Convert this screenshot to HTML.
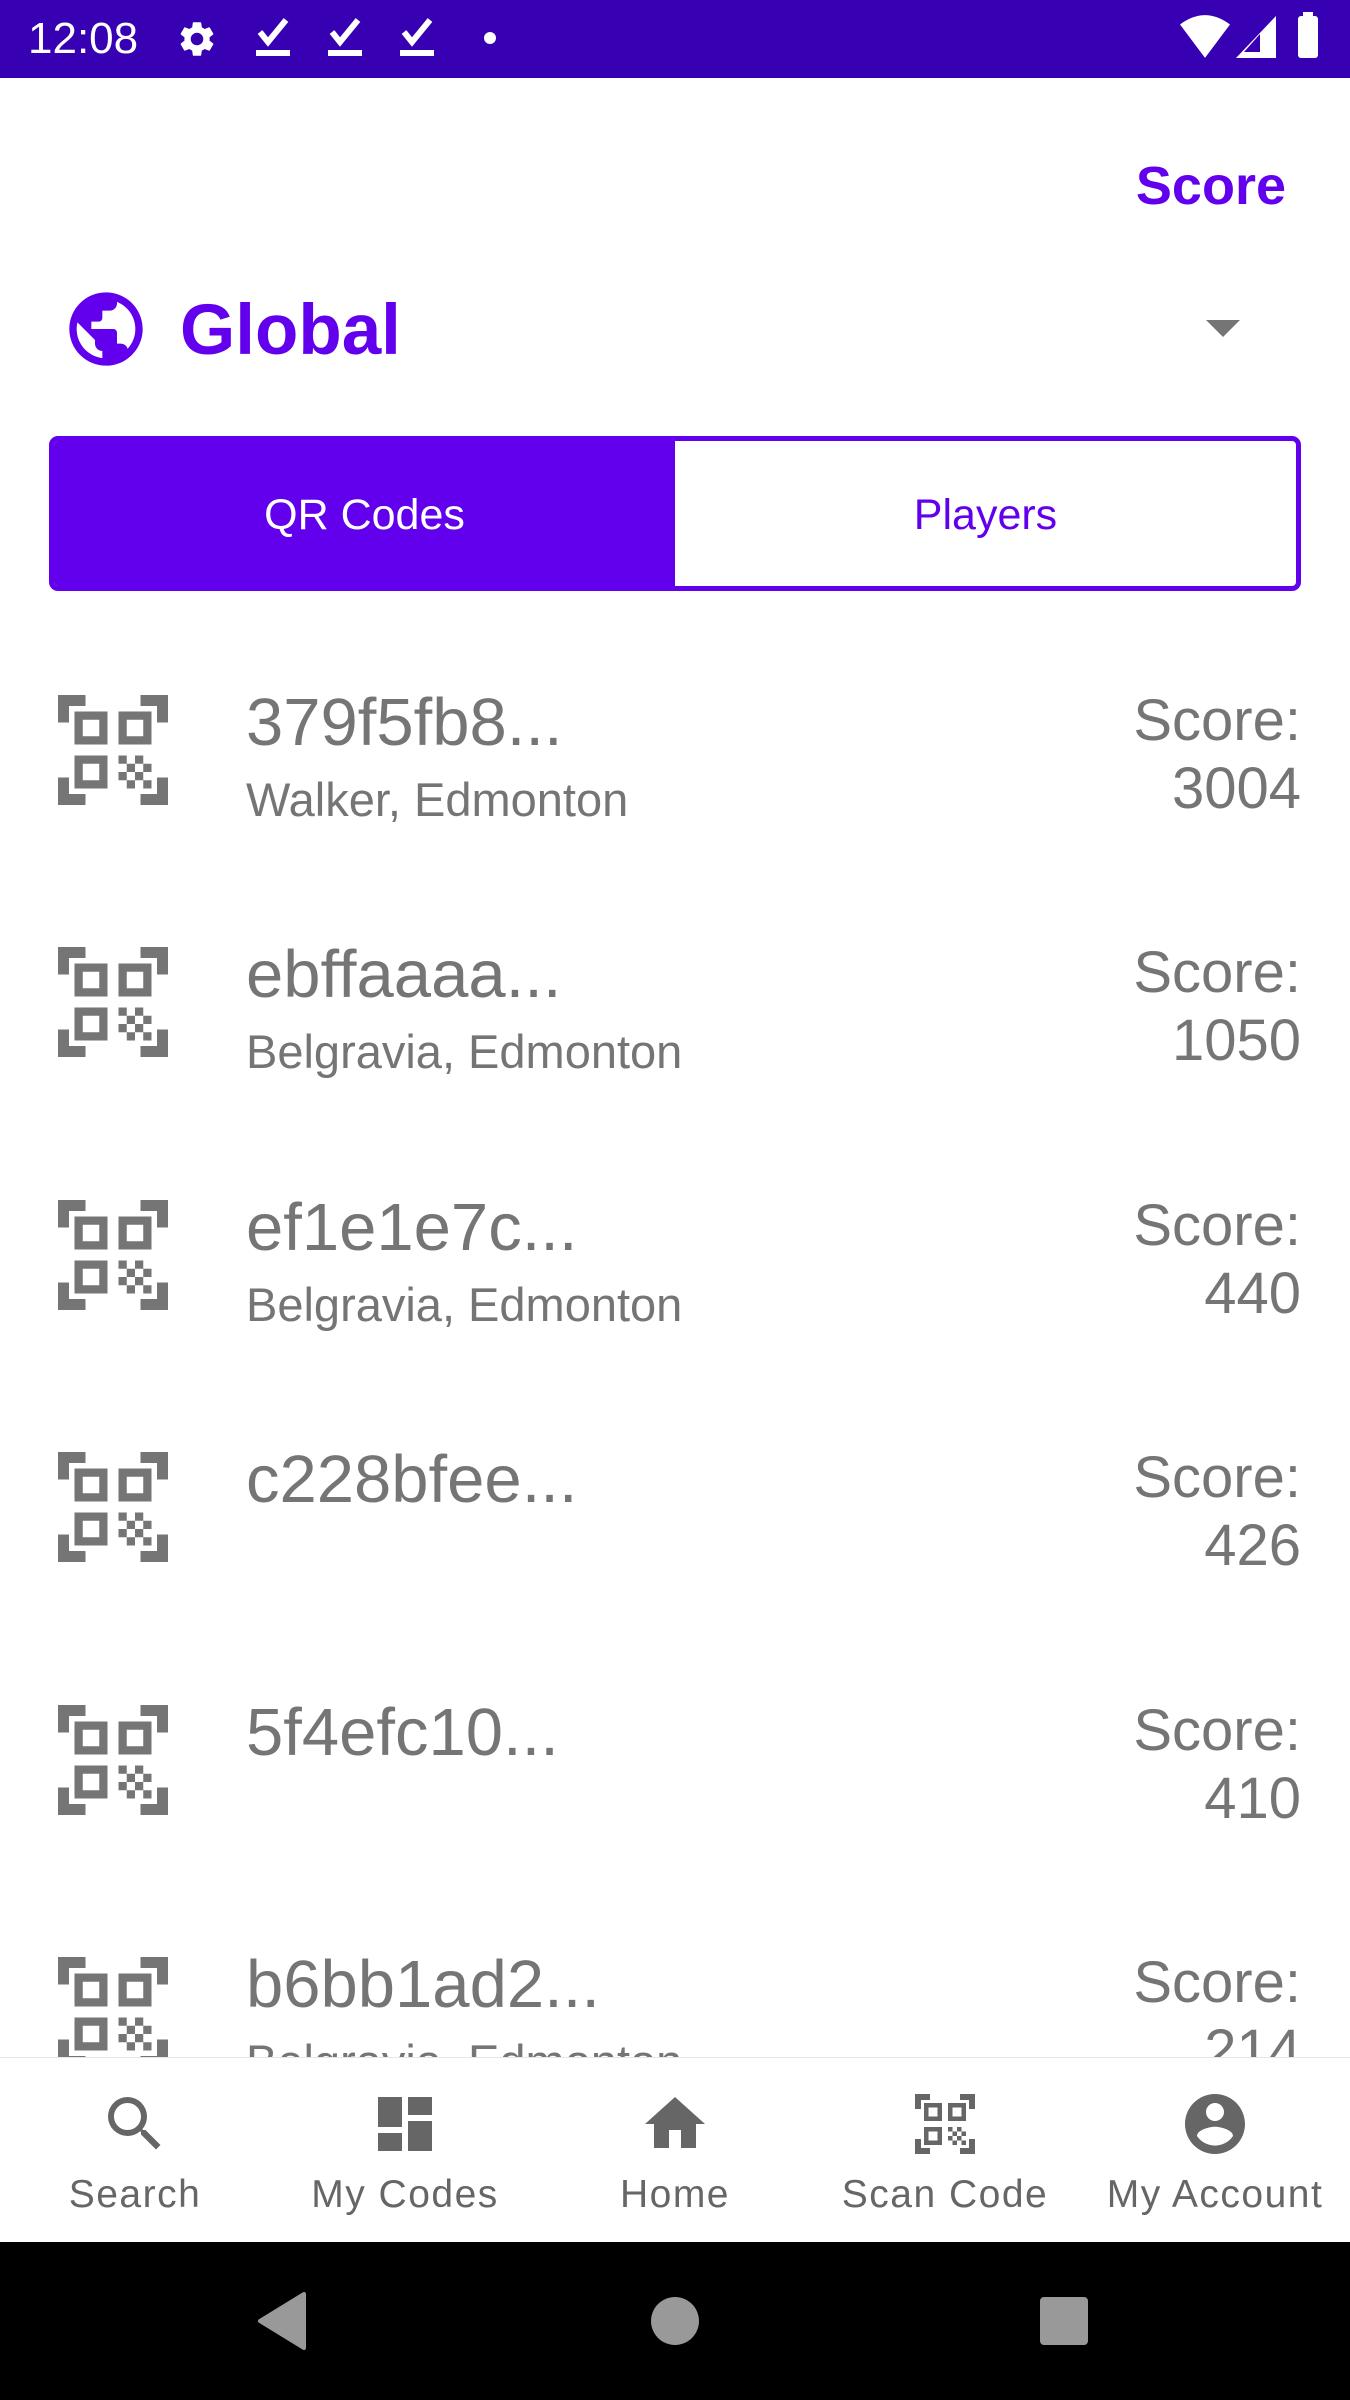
<!DOCTYPE html>
<html><head><meta charset="utf-8"><style>
*{margin:0;padding:0;box-sizing:border-box}
body{width:1350px;height:2400px;background:#fff;font-family:"Liberation Sans",sans-serif;position:relative;overflow:hidden}
.abs{position:absolute}
.status{left:0;top:0;width:1350px;height:78px;background:#3700B3;color:#fff}
.row{position:absolute;left:0;width:1350px;height:252px}
.t{position:absolute;left:246px;font-size:67px;color:#757575;line-height:1}
.s{position:absolute;left:246px;font-size:47px;color:#757575;line-height:1}
.sc{position:absolute;right:49px;font-size:58px;color:#757575;text-align:right;line-height:68px}
.nav{left:0;top:2057px;width:1350px;height:185px;background:#fff;border-top:1px solid #e6e6e6}
.ni{position:absolute;width:270px;text-align:center;top:0}
.ni svg{position:absolute;left:99px;top:30px}
.ni span{position:absolute;left:-10px;width:290px;top:115px;font-size:39px;color:#666;letter-spacing:1.5px}
</style></head><body>
<div class="abs status">
<div class="abs" style="left:28px;top:14px;font-size:44px">12:08</div>
<svg class="abs" style="left:176px;top:18px" width="42" height="42" viewBox="0 0 24 24"><path fill="#fff" d="M19.14 12.94c.04-.3.06-.61.06-.94 0-.32-.02-.64-.07-.94l2.03-1.58a.49.49 0 00.12-.61l-1.920-3.32a.488.488 0 00-.59-.22l-2.39.96c-.5-.38-1.03-.7-1.62-.94l-.36-2.54a.484.484 0 00-.48-.41h-3.84c-.24 0-.43.17-.47.41l-.36 2.54c-.59.24-1.13.57-1.62.94l-2.39-.96c-.22-.08-.47 0-.59.22L2.74 8.87c-.12.21-.08.47.12.61l2.03 1.58c-.05.3-.09.63-.09.94s.02.64.07.94l-2.03 1.58a.49.49 0 00-.12.61l1.92 3.32c.12.22.37.29.59.22l2.39-.96c.5.38 1.03.7 1.62.94l.36 2.54c.05.24.24.41.48.41h3.84c.24 0 .44-.17.47-.41l.36-2.54c.59-.24 1.13-.56 1.62-.94l2.39.96c.22.08.47 0 .59-.22l1.92-3.32c.12-.22.07-.47-.12-.61l-2.01-1.58zM12 15.6c-1.98 0-3.6-1.62-3.6-3.6s1.62-3.6 3.6-3.6 3.6 1.62 3.6 3.6-1.62 3.6-3.6 3.6z"/></svg>
<svg class="abs" style="left:254px;top:16px" width="40" height="44" viewBox="0 0 20 22"><path d="M3 8l4 5 9-11" stroke="#fff" stroke-width="3" fill="none"/><rect x="1" y="17" width="17" height="3" fill="#fff"/></svg>
<svg class="abs" style="left:326px;top:16px" width="40" height="44" viewBox="0 0 20 22"><path d="M3 8l4 5 9-11" stroke="#fff" stroke-width="3" fill="none"/><rect x="1" y="17" width="17" height="3" fill="#fff"/></svg>
<svg class="abs" style="left:398px;top:16px" width="40" height="44" viewBox="0 0 20 22"><path d="M3 8l4 5 9-11" stroke="#fff" stroke-width="3" fill="none"/><rect x="1" y="17" width="17" height="3" fill="#fff"/></svg>
<div class="abs" style="left:484px;top:32px;width:12px;height:12px;border-radius:50%;background:#fff"></div>
<svg class="abs" style="left:1180px;top:14px" width="50" height="46" viewBox="0 0 24 22"><path fill="#fff" d="M12 21L0 5Q12-4 24 5z"/></svg>
<svg class="abs" style="left:1236px;top:16px" width="40" height="42" viewBox="0 0 20 21"><path fill="#fff" d="M20 0v21H0z"/><path fill="#3700B3" d="M12 9v9H4z"/><rect x="14" y="8" width="3" height="10" fill="#fff"/></svg>
<div class="abs" style="left:1298px;top:16px;width:20px;height:42px;background:#fff;border-radius:3px"></div>
<div class="abs" style="left:1303px;top:12px;width:10px;height:6px;background:#fff"></div>
</div>

<div class="abs" style="right:64px;top:155px;font-size:54px;font-weight:bold;color:#6200EE">Score</div>
<svg class="abs" style="left:62px;top:285px" width="88" height="88" viewBox="0 0 24 24"><path fill="#6200EE" d="M12 2C6.48 2 2 6.48 2 12s4.480 10 10 10 10-4.48 10-10S17.52 2 12 2zm-1 17.93c-3.95-.49-7-3.85-7-7.93 0-.62.08-1.21.21-1.79L9 15v1c0 1.1.9 2 2 2v1.930zm6.9-2.54c-.26-.81-1-1.39-1.9-1.39h-1v-3c0-.55-.45-1-1-1H8v-2h2c.55 0 1-.45 1-1V7h2c1.1 0 2-.9 2-2v-.41c2.93 1.19 5 4.06 5 7.41 0 2.08-.8 3.97-2.1 5.39z"/></svg>
<div class="abs" style="left:180px;top:290px;font-size:71px;font-weight:bold;color:#6200EE">Global</div>
<svg class="abs" style="left:1206px;top:320px" width="34" height="18" viewBox="0 0 34 18"><path d="M0 0h34L17 17z" fill="#757575"/></svg>

<div class="abs" style="left:49px;top:436px;width:1252px;height:155px;border:5px solid #6200EE;border-radius:9px;overflow:hidden">
<div class="abs" style="left:0;top:0;width:621px;height:145px;background:#6200EE"></div>
<div class="abs" style="left:0;top:50px;width:621px;text-align:center;color:#fff;font-size:43px">QR Codes</div>
<div class="abs" style="left:621px;top:50px;width:621px;text-align:center;color:#6200EE;font-size:43px">Players</div>
</div>

<div class="abs" style="left:0;top:600px;width:1350px;height:1457px;overflow:hidden">
<div class="row" style="top:0">
<svg class="abs" style="left:47px;top:84px" width="132" height="132" viewBox="0 0 24 24"><path fill="#757575" d="M9.5 6.5v3h-3v-3h3M11 5H5v6h6V5zm-1.5 9.5v3h-3v-3h3M11 13H5v6h6v-6zm6.5-6.5v3h-3v-3h3M19 5h-6v6h6V5zm-6 8h1.5v1.5H13V13zm1.5 1.5H16V16h-1.5v-1.5zM16 13h1.5v1.5H16V13zm-3 3h1.5v1.5H13V16zm1.5 1.5H16V19h-1.5v-1.5zM16 16h1.5v1.5H16V16zm1.5-1.5H19V16h-1.5v-1.5zm0 3H19V19h-1.5v-1.5zM22 7h-2V4h-3V2h5v5zm0 15v-5h-2v3h-3v2h5zM2 22h5v-2H4v-3H2v5zM2 2v5h2V4h3V2H2z"/></svg>
<div class="t" style="top:89px">379f5fb8...</div><div class="s" style="top:176px">Walker, Edmonton</div>
<div class="sc" style="top:87px">Score:<br>3004</div></div>
<div class="row" style="top:252px">
<svg class="abs" style="left:47px;top:84px" width="132" height="132" viewBox="0 0 24 24"><path fill="#757575" d="M9.5 6.5v3h-3v-3h3M11 5H5v6h6V5zm-1.5 9.5v3h-3v-3h3M11 13H5v6h6v-6zm6.5-6.5v3h-3v-3h3M19 5h-6v6h6V5zm-6 8h1.5v1.5H13V13zm1.5 1.5H16V16h-1.5v-1.5zM16 13h1.5v1.5H16V13zm-3 3h1.5v1.5H13V16zm1.5 1.5H16V19h-1.5v-1.5zM16 16h1.5v1.5H16V16zm1.5-1.5H19V16h-1.5v-1.5zm0 3H19V19h-1.5v-1.5zM22 7h-2V4h-3V2h5v5zm0 15v-5h-2v3h-3v2h5zM2 22h5v-2H4v-3H2v5zM2 2v5h2V4h3V2H2z"/></svg>
<div class="t" style="top:89px">ebffaaaa...</div><div class="s" style="top:176px">Belgravia, Edmonton</div>
<div class="sc" style="top:87px">Score:<br>1050</div></div>
<div class="row" style="top:505px">
<svg class="abs" style="left:47px;top:84px" width="132" height="132" viewBox="0 0 24 24"><path fill="#757575" d="M9.5 6.5v3h-3v-3h3M11 5H5v6h6V5zm-1.5 9.5v3h-3v-3h3M11 13H5v6h6v-6zm6.5-6.5v3h-3v-3h3M19 5h-6v6h6V5zm-6 8h1.5v1.5H13V13zm1.5 1.5H16V16h-1.5v-1.5zM16 13h1.5v1.5H16V13zm-3 3h1.5v1.5H13V16zm1.5 1.5H16V19h-1.5v-1.5zM16 16h1.5v1.5H16V16zm1.5-1.5H19V16h-1.5v-1.5zm0 3H19V19h-1.5v-1.5zM22 7h-2V4h-3V2h5v5zm0 15v-5h-2v3h-3v2h5zM2 22h5v-2H4v-3H2v5zM2 2v5h2V4h3V2H2z"/></svg>
<div class="t" style="top:89px">ef1e1e7c...</div><div class="s" style="top:176px">Belgravia, Edmonton</div>
<div class="sc" style="top:87px">Score:<br>440</div></div>
<div class="row" style="top:757px">
<svg class="abs" style="left:47px;top:84px" width="132" height="132" viewBox="0 0 24 24"><path fill="#757575" d="M9.5 6.5v3h-3v-3h3M11 5H5v6h6V5zm-1.5 9.5v3h-3v-3h3M11 13H5v6h6v-6zm6.5-6.5v3h-3v-3h3M19 5h-6v6h6V5zm-6 8h1.5v1.5H13V13zm1.5 1.5H16V16h-1.5v-1.5zM16 13h1.5v1.5H16V13zm-3 3h1.5v1.5H13V16zm1.5 1.5H16V19h-1.5v-1.5zM16 16h1.5v1.5H16V16zm1.5-1.5H19V16h-1.5v-1.5zm0 3H19V19h-1.5v-1.5zM22 7h-2V4h-3V2h5v5zm0 15v-5h-2v3h-3v2h5zM2 22h5v-2H4v-3H2v5zM2 2v5h2V4h3V2H2z"/></svg>
<div class="t" style="top:89px">c228bfee...</div>
<div class="sc" style="top:87px">Score:<br>426</div></div>
<div class="row" style="top:1010px">
<svg class="abs" style="left:47px;top:84px" width="132" height="132" viewBox="0 0 24 24"><path fill="#757575" d="M9.5 6.5v3h-3v-3h3M11 5H5v6h6V5zm-1.5 9.5v3h-3v-3h3M11 13H5v6h6v-6zm6.5-6.5v3h-3v-3h3M19 5h-6v6h6V5zm-6 8h1.5v1.5H13V13zm1.5 1.5H16V16h-1.5v-1.5zM16 13h1.5v1.5H16V13zm-3 3h1.5v1.5H13V16zm1.5 1.5H16V19h-1.5v-1.5zM16 16h1.5v1.5H16V16zm1.5-1.5H19V16h-1.5v-1.5zm0 3H19V19h-1.5v-1.5zM22 7h-2V4h-3V2h5v5zm0 15v-5h-2v3h-3v2h5zM2 22h5v-2H4v-3H2v5zM2 2v5h2V4h3V2H2z"/></svg>
<div class="t" style="top:89px">5f4efc10...</div>
<div class="sc" style="top:87px">Score:<br>410</div></div>
<div class="row" style="top:1262px">
<svg class="abs" style="left:47px;top:84px" width="132" height="132" viewBox="0 0 24 24"><path fill="#757575" d="M9.5 6.5v3h-3v-3h3M11 5H5v6h6V5zm-1.5 9.5v3h-3v-3h3M11 13H5v6h6v-6zm6.5-6.5v3h-3v-3h3M19 5h-6v6h6V5zm-6 8h1.5v1.5H13V13zm1.5 1.5H16V16h-1.5v-1.5zM16 13h1.5v1.5H16V13zm-3 3h1.5v1.5H13V16zm1.5 1.5H16V19h-1.5v-1.5zM16 16h1.5v1.5H16V16zm1.5-1.5H19V16h-1.5v-1.5zm0 3H19V19h-1.5v-1.5zM22 7h-2V4h-3V2h5v5zm0 15v-5h-2v3h-3v2h5zM2 22h5v-2H4v-3H2v5zM2 2v5h2V4h3V2H2z"/></svg>
<div class="t" style="top:89px">b6bb1ad2...</div><div class="s" style="top:176px">Belgravia, Edmonton</div>
<div class="sc" style="top:87px">Score:<br>214</div></div>
</div>

<div class="abs nav">
<div class="ni" style="left:0"><svg width="72" height="72" viewBox="0 0 24 24"><path fill="#666" d="M15.5 14h-.79l-.28-.27A6.47 6.47 0 0016 9.5 6.5 6.5 0 109.5 16c1.61 0 3.09-.59 4.23-1.57l.27.28v.79l5 4.99L20.49 19l-4.99-5zm-6 0C7.01 14 5 11.99 5 9.5S7.01 5 9.5 5 14 7.01 14 9.5 11.99 14 9.5 14z"/></svg><span>Search</span></div>
<div class="ni" style="left:270px"><svg width="72" height="72" viewBox="0 0 24 24"><path fill="#666" d="M3 13h8V3H3v10zm0 8h8v-6H3v6zm10 0h8V11h-8v10zm0-18v6h8V3h-8z"/></svg><span>My Codes</span></div>
<div class="ni" style="left:540px"><svg width="72" height="72" viewBox="0 0 24 24"><path fill="#666" d="M10 20v-6h4v6h5v-8h3L12 3 2 12h3v8z"/></svg><span>Home</span></div>
<div class="ni" style="left:810px"><svg width="72" height="72" viewBox="0 0 24 24"><path fill="#666" d="M9.5 6.5v3h-3v-3h3M11 5H5v6h6V5zm-1.5 9.5v3h-3v-3h3M11 13H5v6h6v-6zm6.5-6.5v3h-3v-3h3M19 5h-6v6h6V5zm-6 8h1.5v1.5H13V13zm1.5 1.5H16V16h-1.5v-1.5zM16 13h1.5v1.5H16V13zm-3 3h1.5v1.5H13V16zm1.5 1.5H16V19h-1.5v-1.5zM16 16h1.5v1.5H16V16zm1.5-1.5H19V16h-1.5v-1.5zm0 3H19V19h-1.5v-1.5zM22 7h-2V4h-3V2h5v5zm0 15v-5h-2v3h-3v2h5zM2 22h5v-2H4v-3H2v5zM2 2v5h2V4h3V2H2z"/></svg><span>Scan Code</span></div>
<div class="ni" style="left:1080px"><svg width="72" height="72" viewBox="0 0 24 24"><path fill="#666" d="M12 2C6.48 2 2 6.48 2 12s4.48 10 10 10 10-4.48 10-10S17.52 2 12 2zm0 3c1.66 0 3 1.34 3 3s-1.34 3-3 3-3-1.34-3-3 1.34-3 3-3zm0 14.2a7.2 7.2 0 01-6-3.22c.03-1.99 4-3.08 6-3.08 1.99 0 5.97 1.09 6 3.08a7.2 7.2 0 01-6 3.22z"/></svg><span>My Account</span></div>
</div>

<div class="abs" style="left:0;top:2242px;width:1350px;height:158px;background:#000">
<svg class="abs" style="left:256px;top:50px" width="52" height="58" viewBox="0 0 52 58"><path d="M48 2L4 29l44 27z" fill="#999" stroke="#999" stroke-width="4" stroke-linejoin="round"/></svg>
<div class="abs" style="left:651px;top:55px;width:48px;height:48px;border-radius:50%;background:#999"></div>
<div class="abs" style="left:1040px;top:55px;width:48px;height:48px;border-radius:4px;background:#999"></div>
</div>
</body></html>
